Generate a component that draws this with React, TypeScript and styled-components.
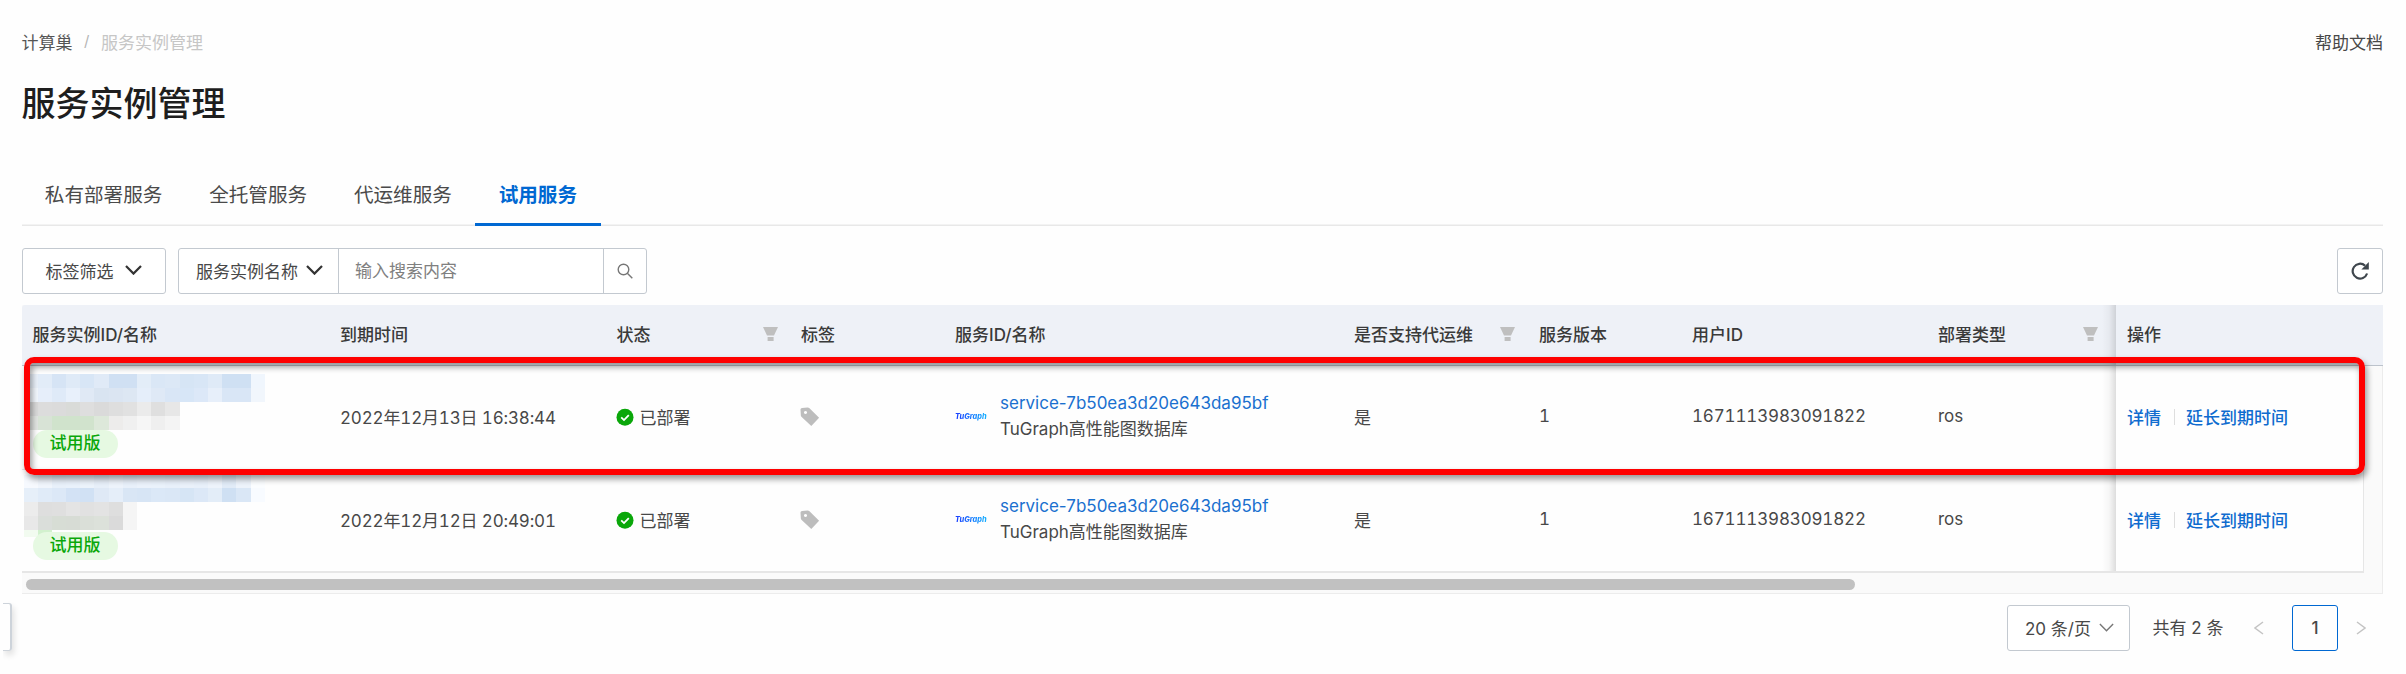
import React from "react";
import styled, { createGlobalStyle, css } from "styled-components";

const Global = createGlobalStyle`
  * { box-sizing: border-box; }
  body { margin: 0; background: #fefefe; }
`;

const Page = styled.main`
  position: relative;
  width: 2406px;
  height: 674px;
  padding: 0 23px 0 21.5px;
  overflow: hidden;
  display: flex;
  flex-direction: column;
  font-family: Inter, "Noto Sans CJK SC", sans-serif;
  font-size: 17px;
  color: #484848;
  white-space: nowrap;
`;

const TopBar = styled.header`
  display: flex;
  justify-content: space-between;
  align-items: center;
  height: 32px;
  margin-top: 25.5px;
`;

const Breadcrumb = styled.nav`
  display: flex;
  gap: 11.5px;
  color: #b5b5b5;
`;
const Crumb = styled.span<{ $root?: boolean }>`
  color: ${(p) => (p.$root ? "#555" : "#c6c6c6")};
`;
const Slash = styled.span`
  padding-top: 1.5px;
  font-size: 15px;
`;
const HelpLink = styled.a`
  color: #484848;
`;

const Title = styled.h1`
  margin: 22.5px 0 0;
  height: 48px;
  line-height: 48px;
  font-size: 34px;
  font-weight: 500;
  color: #1e1e1e;
`;

const Tabs = styled.div`
  display: flex;
  height: 66px;
  margin: 32px 0 22px;
  box-shadow: inset 0 -1.5px 0 #e8e8e8;
  align-items: stretch;
`;
const Tab = styled.div<{ $active?: boolean }>`
  padding: 0 23.5px 0 23.3px;
  font-size: 19.6px;
  line-height: 70px;
  color: #4a4a4a;
  ${(p) =>
    p.$active &&
    css`
      color: #0068d2;
      font-weight: 700;
      box-shadow: inset 0 -3px 0 #0068d2;
    `}
`;

const Toolbar = styled.div`
  display: flex;
  height: 46px;
  margin-bottom: 11px;
`;
const box = css`
  display: flex;
  align-items: center;
  border: 1.5px solid #c3c9d0;
  background: #fff;
`;
const FilterButton = styled.button`
  ${box}
  width: 144.5px;
  margin-right: 12px;
  padding: 0 0 2px 23px;
  gap: 11px;
  border-radius: 3px;
  font: inherit;
  color: #484848;
`;
const SearchGroup = styled.div`
  ${box}
  width: 469px;
  border-radius: 3px;
`;
const SearchField = styled.div`
  display: flex;
  align-items: center;
  gap: 7.5px;
  width: 158.5px;
  padding: 0 0 2px 17px;
`;
const SearchInput = styled.div`
  width: 266px;
  height: 100%;
  line-height: 44px;
  padding-left: 16.5px;
  border: solid #c3c9d0;
  border-width: 0 1px;
  color: #808080;
`;
const SearchButton = styled.div`
  flex: 1;
  display: grid;
  place-items: center;
`;
const RefreshButton = styled.button`
  ${box}
  justify-content: center;
  width: 46px;
  padding: 0;
  margin-left: auto;
  border-radius: 3px;
`;

const Table = styled.section`
  height: 289px;
  background: #fafafa;
  border: solid #ececec;
  border-width: 0 1px 1px 0;
`;
const grid = css`
  display: grid;
  grid-template-columns: 307.5px 276.5px 184.5px 154px 399px 185px 153px 246px 189px 1fr;
`;
const HeadRow = styled.div`
  ${grid}
  width: 2361.5px;
  height: 61px;
  background: #eef1f7;
  border-bottom: 1px solid #bcc3cc;
  border-radius: 3px 0 0 0;
  color: #3a3a3a;
  font-weight: 500;
`;
const BodyRow = styled.div<{ $last?: boolean }>`
  ${grid}
  width: 2342px;
  height: 103.5px;
  background: #fefefe;
  border: solid #e6e6e6;
  border-width: 0 1.5px ${(p) => (p.$last ? 2 : 1)}px 0;
`;
const Cell = styled.div<{ $edge?: boolean }>`
  display: flex;
  align-items: center;
  padding: 0 0 2px 11px;
  min-width: 0;
  ${(p) =>
    p.$edge &&
    css`
      background-image: linear-gradient(to left, rgba(0, 0, 0, 0.13), rgba(0, 0, 0, 0.03) 7px, transparent 14px);
      background-repeat: no-repeat;
    `}
`;
const HeadCell = styled(Cell)<{ $gap?: number }>`
  justify-content: space-between;
  padding-right: ${(p) => p.$gap ?? 0}px;
  padding-bottom: 3px;
`;
const Digits = styled.span`
  font-variant-numeric: tabular-nums;
  letter-spacing: -0.16px;
`;

const InstanceCell = styled.div`
  align-self: start;
  display: flex;
  flex-direction: column;
  align-items: flex-start;
`;
const Mosaic = styled.svg<{ $top: number }>`
  display: block;
  margin: ${(p) => p.$top}px 0 0 2.5px;
`;
const TrialTag = styled.span`
  height: 28px;
  width: 85px;
  margin-left: 11px;
  border-radius: 14px;
  background: #e6f9e2;
  color: #0aa70a;
  font-weight: 500;
  line-height: 26px;
  text-align: center;
`;
const Status = styled.div`
  display: flex;
  align-items: center;
  gap: 6px;
`;
const Service = styled.div`
  display: flex;
  align-items: center;
  gap: 13px;
`;
const Logo = styled.span`
  width: 32px;
  font: italic 800 7.4px Inter, sans-serif;
  background: linear-gradient(90deg, #1b3cff, #19b4ff);
  background-clip: text;
  color: transparent;
`;
const ServiceText = styled.div`
  display: flex;
  flex-direction: column;
  line-height: 26px;
`;
const Link = styled.a`
  color: #1a70cf;
`;
const Actions = styled.div`
  display: flex;
  align-items: center;
  color: #0f6ccf;
  font-weight: 500;
`;
const Divider = styled.i`
  width: 1px;
  height: 16px;
  margin: 2px 11.5px 0 12.5px;
  background: #dedede;
`;

const ScrollTrack = styled.div`
  padding: 6px 0 0 4px;
`;
const ScrollThumb = styled.div`
  width: 1829px;
  height: 11px;
  border-radius: 6px;
  background: #c1c1c1;
`;

const Pagination = styled.footer`
  display: flex;
  justify-content: flex-end;
  align-items: center;
  height: 46px;
  margin-top: 11px;
  padding-right: 17px;
`;
const PageSize = styled.div`
  ${box}
  width: 123px;
  height: 46px;
  padding: 0 0 1px 17px;
  gap: 8px;
  border-radius: 3px;
`;
const Total = styled.span`
  width: 71px;
  margin: 0 30px 4px 22.5px;
`;
const PageNumber = styled.div`
  display: grid;
  place-items: center;
  width: 46px;
  height: 46px;
  margin: 0 18px 0 28.5px;
  border: 1.5px solid #0068d2;
  border-radius: 3px;
  font-weight: 500;
`;

const Highlight = styled.div`
  position: absolute;
  left: 24px;
  top: 357px;
  width: 2341px;
  height: 118px;
  border: 6px solid #fe0000;
  border-radius: 10px;
  box-shadow: 2px 4px 6px rgba(0, 0, 0, 0.4), inset 2px 4px 6px rgba(0, 0, 0, 0.4);
`;
const DrawerHandle = styled.div`
  position: absolute;
  left: 3px;
  top: 603px;
  width: 9px;
  height: 48px;
  border: solid #cdd3da;
  border-width: 1px 2px 1px 0;
  border-radius: 0 3px 3px 0;
  box-shadow: 2px 4px 6px rgba(0, 0, 0, 0.12);
  clip-path: inset(-2px -14px -14px 0);
`;

const Chevron = ({ w = 17, h = 10, stroke = "#333", sw = 2.2 }) => (
  <svg width={w} height={h} viewBox="0 0 17 10" fill="none" stroke={stroke} strokeWidth={sw}>
    <path d="M1 1l7.5 7.6L16 1" />
  </svg>
);
const Arrow = ({ right = false }) => (
  <svg width="10" height="14" viewBox="0 0 10 14" fill="none" stroke="#c4c4c4" strokeWidth="1.5">
    <path d={right ? "M1 1l8 6-8 6" : "M9 1L1 7l8 6"} />
  </svg>
);
const Funnel = () => (
  <svg width="15" height="15" viewBox="0 0 15 15" fill="#bfbfbf" overflow="visible">
    <path d="M0 1h15L11 9.6H4zM4.6 11h6v4h-6z" />
  </svg>
);
const Check = () => (
  <svg width="17" height="17" viewBox="0 0 17 17" overflow="visible">
    <g transform="translate(-.5 .7)">
      <circle cx="8.5" cy="8.5" r="8.5" fill="#0aa70a" />
      <path d="M4.7 8.7l2.8 2.7 4.8-5" fill="none" stroke="#fff" strokeWidth="1.8" />
    </g>
  </svg>
);
const TagIcon = () => (
  <svg width="19" height="19" viewBox="0 0 19 19" fill="#bdbdbd" overflow="visible">
    <path
      transform="translate(-.5 .5)"
      fillRule="evenodd"
      d="M1.5 .6L7 0Q8.3 0 9 .7L18.6 10.3 10.8 18.4 .9 9.2Q.3 8.6 .3 7.6L0 2Q0 .8 1.5 .6zM5 3.4a1.6 1.6 0 1 0 .01 0z"
    />
  </svg>
);
const SearchIcon = () => (
  <svg width="16" height="16" viewBox="0 0 16 16" fill="none" stroke="#777" strokeWidth="1.4">
    <circle cx="6.5" cy="6.5" r="5.3" />
    <path d="M10.3 10.3l5 5" />
  </svg>
);
const RefreshIcon = () => (
  <svg width="18" height="18" viewBox="0 0 18 18">
    <path d="M16.1 11.5A7.4 7.4 0 1 1 14 3.6" fill="none" stroke="#3f464d" strokeWidth="2.2" />
    <path d="M17.8 0v7.6h-7.4z" fill="#3f464d" />
  </svg>
);

type Band = { y: number; h: number; cells: string[] };

const firstBands: Band[] = [
  { y: 0, h: 13.5, cells: ["#eaf1fa", "#e2ecf8", "#d6e4f5", "#dfeaf7", "#d8e6f6", "#e0eaf7", "#d0e0f3", "#d0e0f3", "#e3edf8", "#dae7f6", "#dce8f6", "#d6e5f5", "#d8e6f6", "#dfeaf7", "#cfe0f3", "#cfe0f3", "#f0f6fd"] },
  { y: 13.5, h: 14.5, cells: ["#f2f7fd", "#e6eefa", "#dfeaf8", "#e8f0fb", "#e0e9f5", "#d9e4f1", "#dbe5f2", "#dde7f3", "#e5eefa", "#dfe9f6", "#d9e6f6", "#d7e6f7", "#dce8f8", "#e7effa", "#d9e6f6", "#d9e6f6", "#f1f6fc"] },
  { y: 28, h: 14, cells: ["#d9d9d9", "#dcdcdc", "#dbdbdb", "#d9dbd8", "#dedede", "#dadada", "#dedede", "#e1e1e1", "#ebebeb", "#dfdfdf", "#e7e7e7"] },
  { y: 42, h: 14, cells: ["#e2e5e2", "#d8e3d6", "#d0e3cc", "#d0e3cc", "#d1e3cd", "#dde8da", "#edeceb", "#f0f0f0", "#f6f6f6", "#efefef", "#f4f4f4"] },
];
const secondBands: Band[] = [
  { y: 0, h: 12.5, cells: ["#f6f9fe", "#f0f5fc", "#e8f0fa", "#e9f1fb", "#ecf3fb", "#e7eff9", "#edf3fb", "#e8f0fa", "#ebf2fb", "#eaf2fb", "#e8f0fa", "#eaf1fa", "#e8f0fa", "#edf3fb", "#e1ebf7", "#edf3fb", "#fbfdff"] },
  { y: 12.5, h: 14.5, cells: ["#e6eff9", "#e0ebf8", "#dce8f7", "#d3e2f5", "#d1e1f4", "#dfe9f6", "#e5eef9", "#d9e6f5", "#d7e5f5", "#dbe8f7", "#dae7f6", "#d6e5f5", "#dce8f7", "#e3edf8", "#cfe0f3", "#dae7f6", "#f8fbff"] },
  { y: 27, h: 14, cells: ["#ececec", "#dedede", "#dfdfdf", "#e4e4e4", "#e1e1e1", "#e3e3e3", "#dedede", "#f5f5f5"] },
  { y: 41, h: 14, cells: ["#e8e8e8", "#dadeda", "#d7ddd5", "#d7dcd5", "#dadfd8", "#dce1da", "#dadada", "#f5f5f5"] },
  { y: 55, h: 7, cells: ["#f2fbf0", "#d2f1ce"] },
];

const Redacted = ({ bands, top, height }: { bands: Band[]; top: number; height: number }) => (
  <Mosaic $top={top} width="241" height={height} overflow="visible" shapeRendering="crispEdges">
    {bands.map((b) =>
      b.cells.map((c, i) => (
        <rect
          key={`${b.y}-${i}`}
          x={i === 0 ? 0 : i * 14.2 - 0.7}
          y={b.y}
          width={i === 0 ? 13.6 : 14.3}
          height={b.h + 0.1}
          fill={c}
        />
      )),
    )}
  </Mosaic>
);

const columns = [
  { label: "服务实例ID/名称" },
  { label: "到期时间" },
  { label: "状态", filter: true, gap: 12.5 },
  { label: "标签" },
  { label: "服务ID/名称" },
  { label: "是否支持代运维", filter: true, gap: 13 },
  { label: "服务版本" },
  { label: "用户ID" },
  { label: "部署类型", filter: true, gap: 18, edge: true },
  { label: "操作" },
];
const rows = [
  { date: "2022年12月13日 16:38:44", bands: firstBands, top: 8, height: 56 },
  { date: "2022年12月12日 20:49:01", bands: secondBands, top: 5, height: 57.5 },
];

export default function App() {
  return (
    <Page>
      <Global />
      <TopBar>
        <Breadcrumb>
          <Crumb $root>计算巢</Crumb>
          <Slash>/</Slash>
          <Crumb>服务实例管理</Crumb>
        </Breadcrumb>
        <HelpLink>帮助文档</HelpLink>
      </TopBar>
      <Title>服务实例管理</Title>
      <Tabs>
        <Tab>私有部署服务</Tab>
        <Tab>全托管服务</Tab>
        <Tab>代运维服务</Tab>
        <Tab $active>试用服务</Tab>
      </Tabs>
      <Toolbar>
        <FilterButton>
          标签筛选
          <Chevron />
        </FilterButton>
        <SearchGroup>
          <SearchField>
            服务实例名称
            <Chevron />
          </SearchField>
          <SearchInput>输入搜索内容</SearchInput>
          <SearchButton>
            <SearchIcon />
          </SearchButton>
        </SearchGroup>
        <RefreshButton>
          <RefreshIcon />
        </RefreshButton>
      </Toolbar>
      <Table>
        <HeadRow>
          {columns.map((c) => (
            <HeadCell key={c.label} $gap={c.gap} $edge={c.edge}>
              {c.label}
              {c.filter && <Funnel />}
            </HeadCell>
          ))}
        </HeadRow>
        {rows.map((r, i) => (
          <BodyRow key={r.date} $last={i === rows.length - 1}>
            <InstanceCell>
              <Redacted bands={r.bands} top={r.top} height={r.height} />
              <TrialTag>试用版</TrialTag>
            </InstanceCell>
            <Cell>
              <Digits>{r.date}</Digits>
            </Cell>
            <Cell>
              <Status>
                <Check />
                已部署
              </Status>
            </Cell>
            <Cell>
              <TagIcon />
            </Cell>
            <Cell>
              <Service>
                <Logo>TuGraph</Logo>
                <ServiceText>
                  <Link>service-7b50ea3d20e643da95bf</Link>
                  <span>TuGraph高性能图数据库</span>
                </ServiceText>
              </Service>
            </Cell>
            <Cell>是</Cell>
            <Cell>
              <Digits>1</Digits>
            </Cell>
            <Cell>
              <Digits>1671113983091822</Digits>
            </Cell>
            <Cell $edge>ros</Cell>
            <Cell>
              <Actions>
                详情
                <Divider />
                延长到期时间
              </Actions>
            </Cell>
          </BodyRow>
        ))}
        <ScrollTrack>
          <ScrollThumb />
        </ScrollTrack>
      </Table>
      <Pagination>
        <PageSize>
          20 条/页
          <Chevron w={15} h={11} stroke="#777" sw={1.6} />
        </PageSize>
        <Total>共有 2 条</Total>
        <Arrow />
        <PageNumber>1</PageNumber>
        <Arrow right />
      </Pagination>
      <Highlight />
      <DrawerHandle />
    </Page>
  );
}
